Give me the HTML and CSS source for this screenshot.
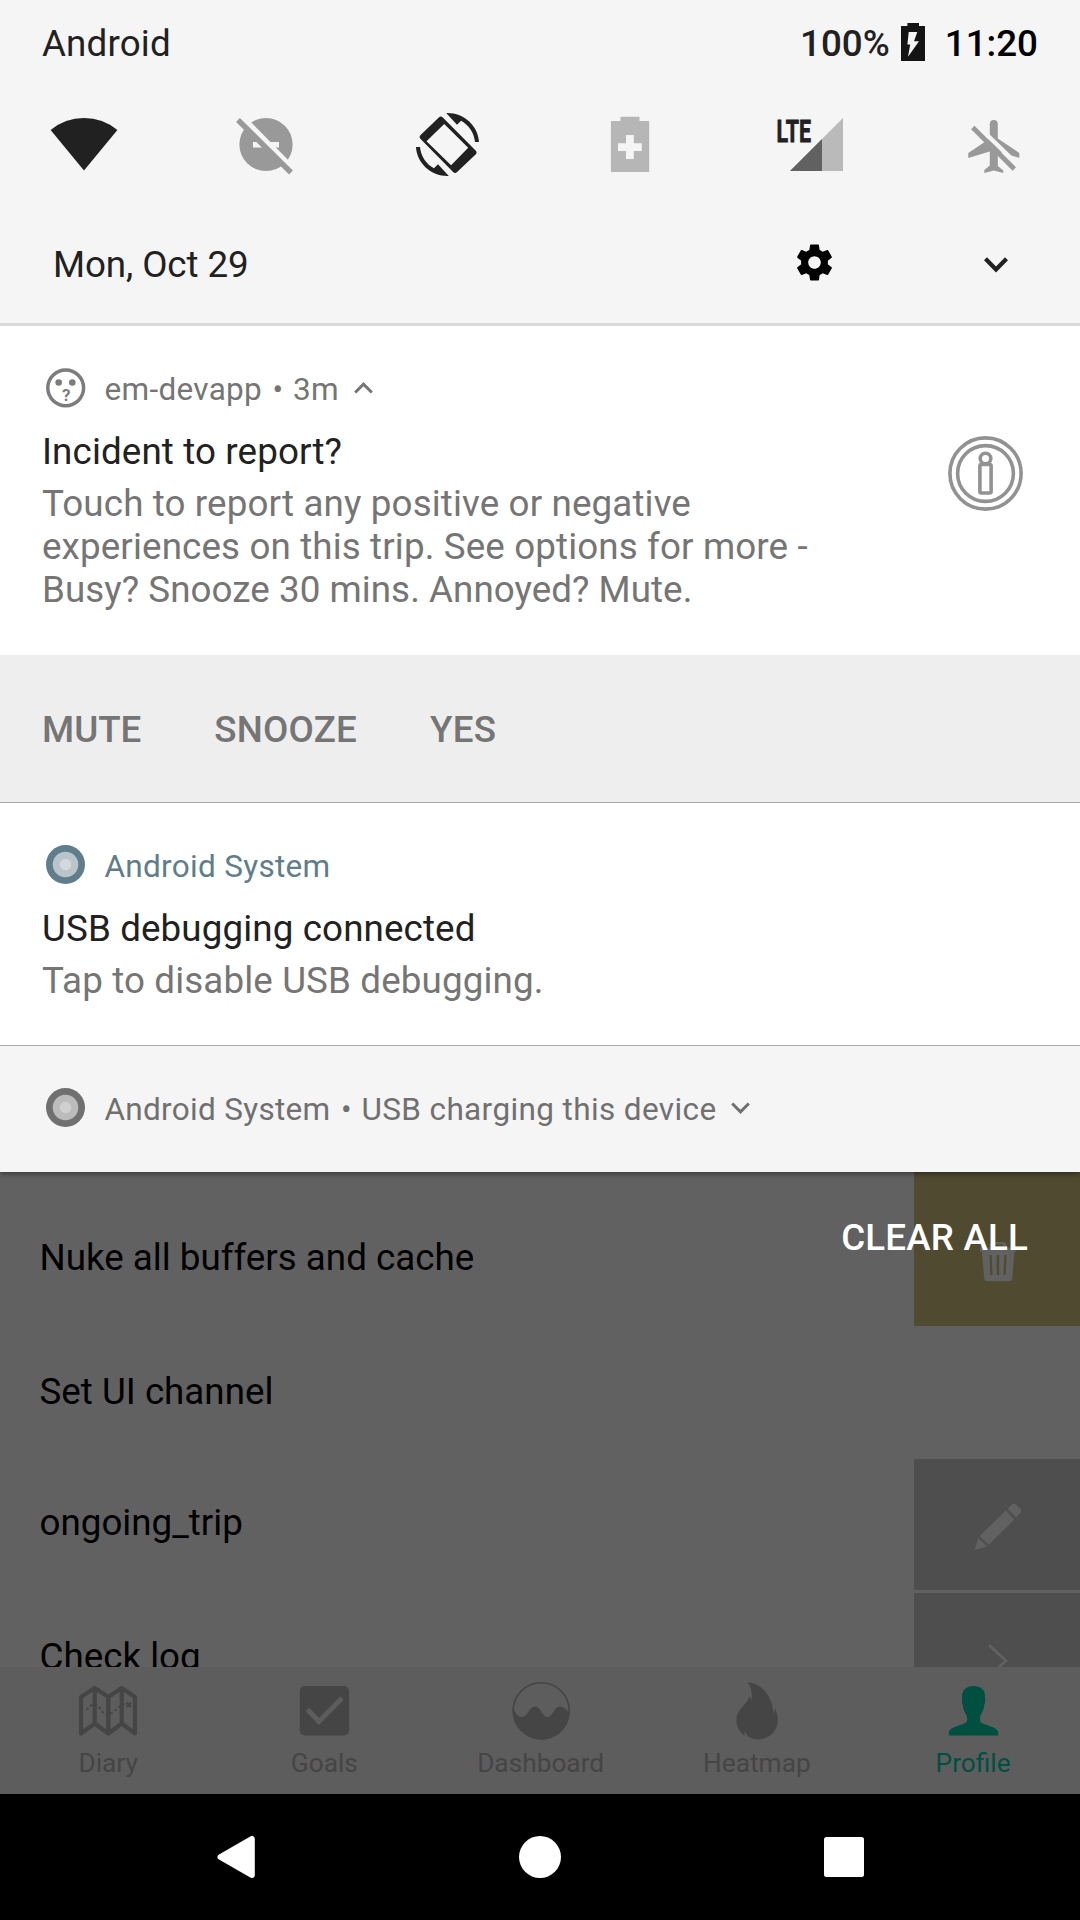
FILE: index.html
```html
<!DOCTYPE html>
<html lang="en">
<head>
<meta charset="utf-8">
<title>Notifications</title>
<link rel="stylesheet" href="styles.css">
</head>
<body>
<div class="screen">
  <section class="shade">
    <header class="quick">
      <div class="status">
        <span class="carrier">Android</span>
        <span class="percent">100%</span>
        <svg class="charge" width="24" height="38" viewBox="901 23 24 38"><path fill="#141414" d="M907.4 23h11.600v3h6v35h-24V26h6.400z"/><path fill="#f5f5f5" d="M908.700 32h8.600l-3.300 9.200h5l-11 15.500 2.200-12.200h-2.800z"/></svg>
        <span class="clock">11:20</span>
      </div>
      <div class="toggles">
        <svg width="64" height="66" viewBox="52 112 64 66"><path fill="#212121" d="M84 170.500L50.600 130Q65 118 84 118T117.400 130z"/></svg>
        <svg width="64" height="66" viewBox="234 112 64 66"><circle cx="266" cy="144.500" r="26.600" fill="#999"/><path fill="#f5f5f5" d="M253 142h26v5.500h-26z"/><path stroke="#f5f5f5" stroke-width="5" d="M240 114.500l52 53"/><path stroke="#999" stroke-width="5.400" d="M238 120l53 52.500"/></svg>
        <svg width="64" height="66" viewBox="416 112 64 66" fill="#212121"><path fill-rule="evenodd" d="M438.800 117.500q2-2 4 0l32.800 33q2 2 0 4l-18.500 17.500q-2 2-4 0l-32.500-33q-2-2 0-4zM444.200 124l-17.700 17.200 24.600 24L468.200 147.700z"/><path d="M446.200 113c18-.5 32 13 32.800 29h-4c-.8-9-6-17-14-21.300l-4 4zM448.800 176c-18 .5-32-13-32.800-29h4c.8 9 6 17 14 21.300l4-4z"/></svg>
        <svg width="64" height="66" viewBox="598 112 64 66"><path fill="#b6b6b6" d="M620.500 116.700h19v4.300h9.700v51h-38.300v-51h9.600z"/><path fill="#f5f5f5" d="M626 135h7.800v8.200h8v7.800h-8v8H626v-8h-8v-7.800h8z"/></svg>
        <svg width="64" height="66" viewBox="780 112 64 66"><path fill="#bababa" d="M843 118v53h-53z"/><path fill="#616161" d="M822 139v32h-32z"/><text class="lte" x="776.500" y="142" textLength="34.500" lengthAdjust="spacingAndGlyphs">LTE</text></svg>
        <svg width="64" height="66" viewBox="961.700 112 64 66"><path fill="#999" d="M989.500 124q0-4 4-4t4 4v14.500l21.500 14.500v5l-21.500-6.500v14.500l5.500 4.500v2.500l-9.500-2.500-9.500 2.500V170l5.500-4.500V151.500L968 158v-5l21.500-14.500z"/><path stroke="#f5f5f5" stroke-width="4.500" d="M976 124.500l42 41"/><path stroke="#999" stroke-width="4.800" d="M972.500 127.500l41.500 41.500"/></svg>
      </div>
      <div class="dateline">
        <span class="date">Mon, Oct 29</span>
        <svg width="43" height="43" viewBox="0 0 24 24"><path d="M19.430 12.980c.04-.32.07-.64.07-.98s-.03-.66-.07-.98l2.110-1.650c.19-.15.24-.42.12-.64l-2-3.460c-.12-.22-.39-.3-.61-.22l-2.490 1c-.52-.4-1.080-.73-1.690-.98l-.38-2.650C14.460 2.180 14.250 2 14 2h-4c-.25 0-.46.18-.49.42l-.38 2.650c-.61.25-1.170.59-1.690.98l-2.490-1c-.23-.09-.49 0-.61.22l-2 3.460c-.13.22-.07.49.12.64l2.110 1.650c-.04.32-.07.65-.07.98s.03.66.07.98l-2.110 1.650c-.19.15-.24.42-.12.64l2 3.460c.12.22.39.3.61.22l2.490-1c.52.4 1.080.73 1.690.98l.38 2.650c.03.24.24.42.49.42h4c.25 0 .46-.18.49-.42l.38-2.650c.61-.25 1.170-.59 1.690-.98l2.490 1c.23.09.49 0 .61-.22l2-3.460c.12-.22.07-.49-.12-.64l-2.110-1.650zM12 15.500c-1.930 0-3.500-1.570-3.500-3.500s1.570-3.500 3.500-3.500 3.500 1.570 3.500 3.500-1.570 3.500-3.500 3.500z"/></svg>
        <svg class="expand" width="24" height="16" viewBox="0 0 24 16"><path fill="none" stroke="#212121" stroke-width="4.200" d="M1.500 1.800L12 12.500 22.500 1.800"/></svg>
      </div>
    </header>

    <article class="note">
      <div class="note-head">
        <svg width="40" height="40" viewBox="0 0 40 40"><circle cx="19.700" cy="19.800" r="17.900" fill="none" stroke="#7c7c7c" stroke-width="3.500"/><circle cx="12.700" cy="14.500" r="3.300" fill="#7c7c7c"/><circle cx="26.300" cy="14.500" r="3.300" fill="#7c7c7c"/><text class="mouth" x="20.500" y="33">?</text></svg>
        <span>em-devapp</span><span class="dot">•</span><span>3m</span>
        <svg class="arrow up" width="19" height="12" viewBox="0 0 19 12"><path fill="none" stroke="#757575" stroke-width="3" d="M1.200 10.500L9.500 2.200l8.300 8.300"/></svg>
      </div>
      <div class="note-main">
        <div class="note-text">
          <h2>Incident to report?</h2>
          <p>Touch to report any positive or negative<br>experiences on this trip. See options for more -<br><span class="last">Busy? Snooze 30 mins. Annoyed? Mute.</span></p>
        </div>
        <svg class="info" width="76" height="76" viewBox="0 0 76 76" fill="none" stroke="#929292" stroke-width="3.600"><circle cx="37.500" cy="37.500" r="35.600"/><circle cx="37.500" cy="37.500" r="27.900"/><rect x="31.900" y="28.500" width="11.200" height="28.500" rx="1.500"/><circle cx="37.500" cy="22.500" r="5.300"/></svg>
      </div>
    </article>
    <div class="actions"><span>MUTE</span><span class="wide">SNOOZE</span><span class="wide">YES</span></div>

    <article class="note system">
      <div class="note-head blue">
        <svg width="40" height="40" viewBox="0 0 40 40"><circle cx="19.500" cy="19.500" r="19.500" fill="#5f7d8a"/><circle cx="19.500" cy="19.500" r="12.800" fill="#bac5cb"/><circle cx="19.500" cy="19.500" r="5.800" fill="#d2dade"/></svg>
        <span>Android System</span>
      </div>
      <div class="note-text">
        <h2>USB debugging connected</h2>
        <p>Tap to disable USB debugging.</p>
      </div>
    </article>

    <article class="note minimized">
      <div class="note-head">
        <svg width="40" height="40" viewBox="0 0 40 40"><circle cx="19.500" cy="19.500" r="19.500" fill="#707070"/><circle cx="19.500" cy="19.500" r="12.800" fill="#bcbcbc"/><circle cx="19.500" cy="19.500" r="5.800" fill="#d0d0d0"/></svg>
        <span>Android System</span><span class="dot">•</span><span class="summary">USB charging this device</span>
        <svg class="arrow down" width="19" height="12" viewBox="0 0 19 12"><path fill="none" stroke="#707070" stroke-width="3" d="M1.200 1.500l8.300 8.300 8.300-8.300"/></svg>
      </div>
    </article>
  </section>

  <main class="settings">
    <div class="row first">
      <span>Nuke all buffers and cache</span>
      <div class="cell gold"><svg width="167" height="154" viewBox="913.500 1172 167 154"><path fill="#616161" fill-rule="evenodd" d="M979.500 1247.500h9.500v-2q0-3.500 3.500-3.500h10q3.500 0 3.500 3.500v2h9.500v4H1014l-2.300 27q-.3 2.700-3 2.700h-22q-2.700 0-3-2.700l-2.300-27h-1.900zM992 1247.500h11.200v-1.500q0-1.500-1.500-1.500h-8.200q-1.500 0-1.500 1.500zM989 1255l.8 20h2.200l-.8-20zM996.200 1255v20h2.400v-20zM1003.800 1255l-.8 20h2.200l.8-20z"/></svg></div>
      <span class="clear">CLEAR ALL</span>
    </div>
    <div class="row second"><span>Set UI channel</span></div>
    <div class="row third">
      <span>ongoing_trip</span>
      <div class="cell"><svg width="167" height="131" viewBox="913.500 1459 167 131" fill="#616161"><path d="M1007.200 1508.800l4-4q2.200-2.200 4.500 0l4 4q2.200 2.200 0 4.500l-4 4.500zM1005.300 1510.600l8.400 9-25.700 25.500-8.800-9.100zM977.800 1537.800l8.800 8.800-12.300 3.400z"/></svg></div>
    </div>
    <div class="row fourth">
      <span>Check log</span>
      <div class="cell"><svg width="167" height="74" viewBox="913.500 1593 167 74"><path fill="none" stroke="#616161" stroke-width="2.800" d="M988.500 1645l17 15.700-17 16"/></svg></div>
    </div>
  </main>

  <nav class="tabs">
    <div class="tab"><svg width="60" height="60" viewBox="78 1681 60 60" fill="none" stroke="#454545"><path stroke-width="4.200" stroke-linejoin="round" d="M81 1697l13.700-9 13.600 9 13.400-9 13.300 9v36.500l-13.300-10-13.400 10-13.600-10-13.700 10zM94.700 1688v36M108.300 1697v36M121.700 1688v36"/><path stroke-width="2" stroke-dasharray="2.500 2.500" d="M86.500 1710q8-10 13.500-1.500t10 5.500 8-6 8-4.500"/><path stroke-width="2" d="M126.500 1702.500l4.500 4.500m0-4.500l-4.500 4.500"/></svg><span>Diary</span></div>
    <div class="tab"><svg width="60" height="60" viewBox="294 1681 60 60"><rect x="299.700" y="1686" width="49.400" height="49.400" rx="5" fill="#454545"/><path fill="none" stroke="#5d5d5d" stroke-width="4.800" d="M307.500 1709.500l11.500 12 23-23.500"/></svg><span>Goals</span></div>
    <div class="tab"><svg width="60" height="60" viewBox="510.500 1681 60 60"><circle cx="540.700" cy="1710.700" r="28" fill="none" stroke="#454545" stroke-width="1.600"/><path fill="#454545" d="M512 1708c3.500 5 5 9 9.500 9 6 0 7-10.500 13-10.500s7 10.500 12.500 10.500 6.500-10.500 12-10.500 7 4 10 6.500c-1 15.500-13 26.600-28.300 26.600S512 1726 512 1708z"/></svg><span>Dashboard</span></div>
    <div class="tab"><svg width="60" height="60" viewBox="727 1681 60 60"><path fill="#454545" d="M747.500 1682c17 2 25.500 17 26 32.500q1.200-3 1.500-6.500c2 5 2.800 8 2.800 12 0 12-9.500 19.400-20.300 19.400-7 0-11.500-3.400-12.500-8.900q-.8 2-.3 5.500c-5-4-8.200-9-8.200-15.500 0-12 10.500-15 13-24.500q1.400 2 1.500 5.500c2-7 .5-14-3.500-19.500z"/></svg><span>Heatmap</span></div>
    <div class="tab active"><svg width="60" height="60" viewBox="943 1681 60 60"><path fill="#005042" d="M973.500 1686c7 0 11.700 3.500 11.500 10.500q.4 7-.7 8.500c-.5 5-2.300 7.500-3.300 9.500-1.200 2.500-1.300 5-.7 7 2 4 18 4.500 18 11.500v2.500h-49.500V1733c0-7 16-7.500 18-11.500.6-2 .5-4.500-.7-7-1-2-2.800-4.500-3.300-9.500q-1.100-1.500-.7-8.500c-.2-7 4.500-10.500 11.400-10.500z"/></svg><span>Profile</span></div>
  </nav>

  <footer class="keys">
    <svg width="42" height="42" viewBox="215 1836 42 42"><path fill="#fff" stroke="#fff" stroke-width="6" stroke-linejoin="round" d="M220.500 1857l31.300-18v36z"/></svg>
    <svg width="42" height="42" viewBox="0 0 42 42"><circle cx="21" cy="21" r="21" fill="#fff"/></svg>
    <svg width="42" height="42" viewBox="0 0 42 42"><rect x="1" y="1" width="40" height="40" rx="2.500" fill="#fff"/></svg>
  </footer>
</div>
</body>
</html>
```
FILE: styles.css
```css
* { box-sizing: border-box; }
body { margin: 0; background: #616161; font-family: Roboto, sans-serif; font-size: 36.75px; line-height: 43px; color: #212121; }
.screen { width: 1080px; height: 1920px; overflow: hidden; display: flex; flex-direction: column; }
svg { display: block; flex: none; overflow: visible; }
span { white-space: nowrap; }

.shade { position: relative; z-index: 2; height: 1172px; flex: none; background: #fff; box-shadow: 0 1px 6px rgba(0, 0, 0, .55); }
.quick { height: 326px; background: #f5f5f5; border-bottom: 3px solid #d9d9d9; padding-top: 22px; }
.status { display: flex; height: 43px; padding: 0 42px; }
.carrier { flex: 1; letter-spacing: .15px; }
.percent { font-weight: 500; }
.charge { margin: 1px 20px 0 11px; }
.clock { font-weight: 500; color: #000; }
.toggles { display: flex; justify-content: space-between; margin-top: 47px; padding: 0 54px 0 52px; }
.lte { font-size: 32px; font-weight: 700; fill: #212121; stroke: #212121; stroke-width: .8px; }
.dateline { display: flex; margin-top: 65px; padding: 0 72px 0 53px; }
.date { flex: 1; letter-spacing: -.1px; }
.dateline svg { margin-top: -2px; }
.dateline .expand { margin: 14px 0 0 148.5px; }

.note { padding: 42px 43px 0 42px; height: 329px; }
.note-head { display: flex; align-items: flex-end; height: 40px; padding-left: 4px; font-size: 31.5px; line-height: 37px; letter-spacing: .3px; color: #757575; }
.note-head > svg:first-child { margin-right: 18.5px; }
.note-head .dot { margin: 0 9.5px 0 10.5px; }
.note-head .arrow { margin: 0 0 14px 15px; }
.summary { letter-spacing: .38px; }
.mouth { font-size: 17px; font-weight: 700; fill: #7c7c7c; text-anchor: middle; }
.note-main { display: flex; justify-content: space-between; }
h2 { margin: 22px 0 0; font-size: inherit; font-weight: 400; letter-spacing: .12px; color: #212121; }
.note-text p { margin: 9px 0 0; letter-spacing: .13px; color: #757575; }
.note-text .last { letter-spacing: .05px; }
.info { margin: 28px 13px 0 0; }
.actions { display: flex; gap: 73px; height: 148px; padding: 53px 42px 0; background: #eee; border-bottom: 1px solid #a9a9a9; font-weight: 500; color: #757575; }
.wide { letter-spacing: .2px; }
.system { height: 243px; border-bottom: 1px solid #a9a9a9; }
.blue { color: #5f7d8a; }
.minimized { height: 126px; background: #f5f5f5; }
.minimized .note-head { color: #707070; }

.settings { height: 495px; flex: none; overflow: hidden; color: #000; }
.row { position: relative; display: flex; justify-content: space-between; padding-left: 39.5px; overflow: hidden; }
.first { height: 154px; }
.second { height: 133px; }
.third { height: 134px; }
.fourth { height: 74px; }
.first > span { margin-top: 64px; }
.second > span { margin-top: 44px; }
.third > span { margin-top: 42px; }
.fourth > span { margin-top: 42px; }
.cell { width: 166.500px; background: #4e4e4e; }
.third .cell { height: 131px; }
.gold { background: #504a30; }
.row .clear { position: absolute; right: 52px; top: 44px; margin: 0; font-weight: 500; letter-spacing: .17px; color: #fff; }

.tabs { display: flex; height: 127px; flex: none; background: #5d5d5d; font-size: 26.25px; line-height: 31px; color: #454545; }
.tab { width: 216.250px; flex: none; display: flex; flex-direction: column; align-items: center; padding-top: 14px; }
.tab span { margin-top: 7px; }
.active { color: #005042; }
.keys { display: flex; justify-content: space-between; height: 126px; flex: none; padding: 42px 215px 0; background: #000; }
```
